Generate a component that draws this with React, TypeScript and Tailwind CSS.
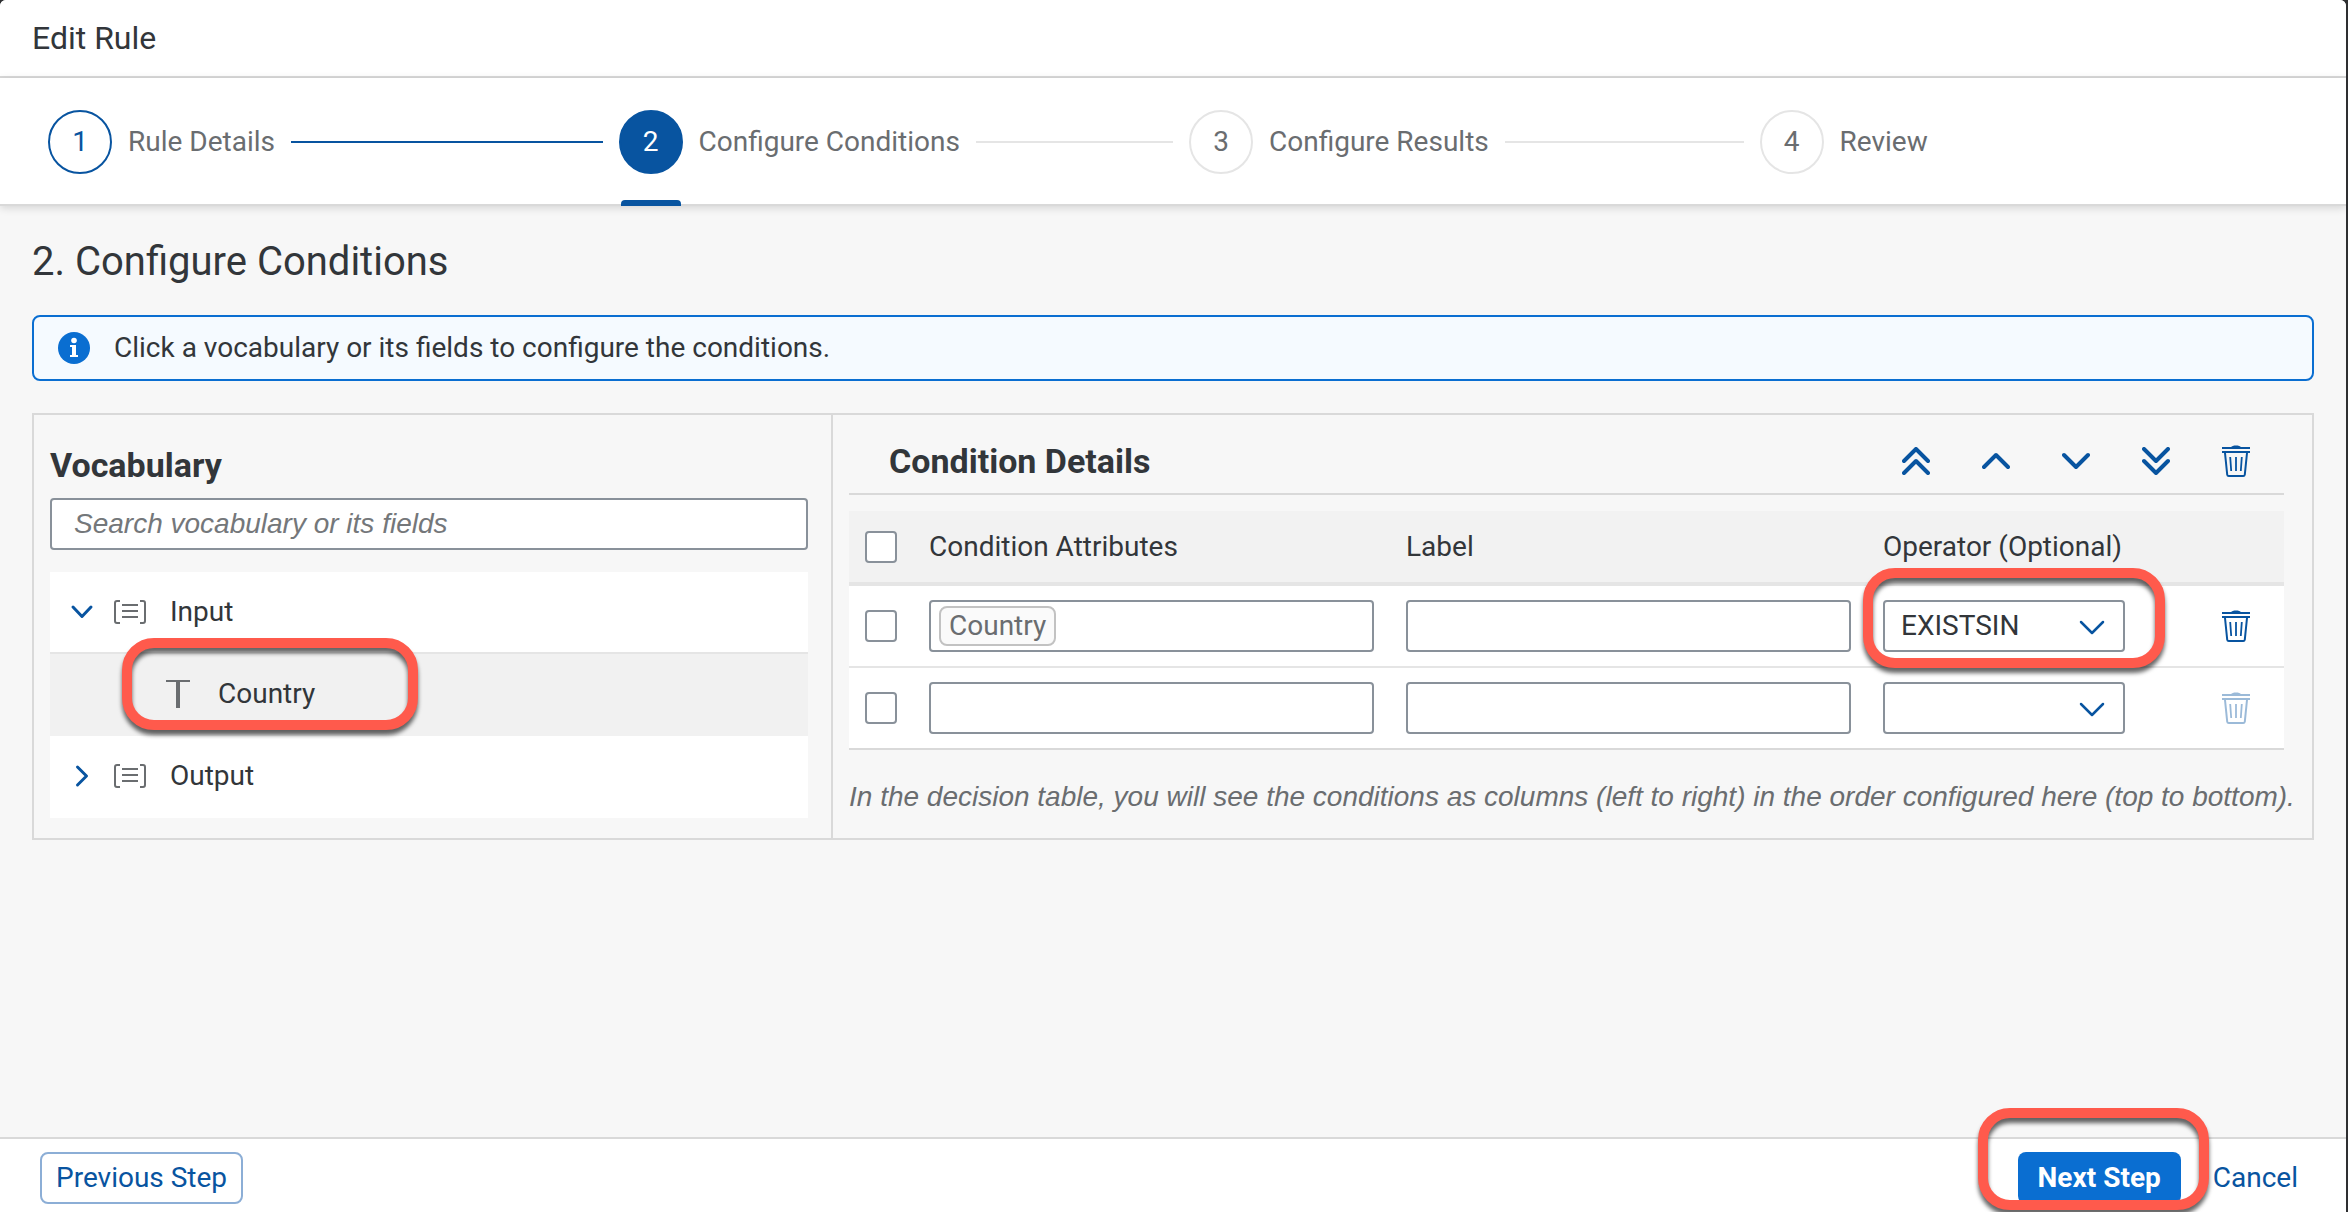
import type { ReactNode } from "react";

/* ---------- Icons ---------- */

function TrashIcon() {
  return (
    <svg viewBox="0 0 28 32" className="h-8 w-7" fill="none" stroke="currentColor" aria-hidden="true">
      <path d="M9 2.2C10 0 18 0 19 2.2Z" fill="currentColor" stroke="none" />
      <path d="M0 3h28M0 7h28" strokeWidth="2" />
      <path d="M3 8l2.2 21.6q.2 1.4 1.6 1.4h14.4q1.4 0 1.600-1.4L25 8" strokeWidth="2" />
      <path d="M8.200 12l1 14M14 12v14M19.800 12l-1 14" strokeWidth="1.800" />
    </svg>
  );
}

function ToolChevron({ d }: { d: string }) {
  return (
    <svg viewBox="0 0 28 28" className="size-7" fill="none" stroke="currentColor" strokeWidth="4" strokeLinecap="round" strokeLinejoin="round" aria-hidden="true">
      <path d={d} />
    </svg>
  );
}

function TreeArrow({ open }: { open: boolean }) {
  return (
    <svg viewBox="0 0 24 24" className="size-6 shrink-0 text-[#0854a0]" fill="none" stroke="currentColor" strokeWidth="3" strokeLinecap="round" strokeLinejoin="round" aria-hidden="true">
      <path d={open ? "M3 7l9 9.500L21 7" : "M7.500 3l9 9-9 9"} />
    </svg>
  );
}

function StructureIcon() {
  return (
    <svg viewBox="0 0 32 24" className="h-6 w-8 shrink-0 text-[#6a6d70]" fill="none" stroke="currentColor" strokeWidth="2" aria-hidden="true">
      <path d="M6 1H3Q1 1 1 3v18q0 2 2 2h3M26 1h3q2 0 2 2v18q0 2-2 2h-3" />
      <path d="M8 5h16M8 11h16M8 17h16" />
    </svg>
  );
}

function TextTypeIcon() {
  return (
    <svg viewBox="0 0 24 28" className="h-7 w-6 shrink-0 text-[#6a6d70]" fill="currentColor" aria-hidden="true">
      <rect width="24" height="2" />
      <rect x="10" width="4" height="28" />
    </svg>
  );
}

function InfoIcon() {
  return (
    <svg viewBox="0 0 32 32" className="size-8 shrink-0" aria-hidden="true">
      <circle cx="16" cy="16" r="16" fill="#0a6ed1" />
      <circle cx="16" cy="8.500" r="2.800" fill="#fff" />
      <path d="M12 13h6v10h2v2h-8v-2h2v-8h-2z" fill="#fff" />
    </svg>
  );
}

/* ---------- Shared parts ---------- */

function Highlight({ className }: { className: string }) {
  return (
    <span
      aria-hidden="true"
      className={`pointer-events-none absolute z-20 rounded-[32px] border-[10px] border-[#ff5a4c] drop-shadow-[0_5px_2px_rgba(0,0,0,0.6)] ${className}`}
    />
  );
}

function CheckBox({ label }: { label: string }) {
  return (
    <input
      type="checkbox"
      aria-label={label}
      className="block size-8 appearance-none rounded-sm border-2 border-[#89919a] bg-white checked:bg-[#0854a0]"
    />
  );
}

const circleStyles = {
  done: "border-[#0854a0] bg-white text-[#0854a0]",
  active: "border-[#0854a0] bg-[#0854a0] text-white",
  todo: "border-[#e5e5e5] bg-white text-[#6a6d70]",
};

type StepState = keyof typeof circleStyles;

const steps: { label: string; state: StepState }[] = [
  { label: "Rule Details", state: "done" },
  { label: "Configure Conditions", state: "active" },
  { label: "Configure Results", state: "todo" },
  { label: "Review", state: "todo" },
];

function Wizard() {
  return (
    <nav aria-label="Wizard steps" className="relative z-10 border-b-2 border-[#d9d9d9] bg-white pt-8 pr-4 pb-[30px] pl-12 shadow-[0_2px_8px_rgba(0,0,0,0.14)]">
      <ol className="grid grid-cols-4">
        {steps.map((step, i) => (
          <li key={step.label} className="flex items-center gap-4 pr-4">
            <button
              type="button"
              aria-current={step.state === "active" ? "step" : undefined}
              className="relative flex items-center gap-4 whitespace-nowrap text-[#6a6d70]"
            >
              <span className={`flex size-16 items-center justify-center rounded-full border-2 ${circleStyles[step.state]}`}>{i + 1}</span>
              {step.label}
              {step.state === "active" && <span className="absolute -bottom-8 left-0.5 h-1.5 w-[60px] rounded-t bg-[#0854a0]" />}
            </button>
            {i < steps.length - 1 && (
              <span className={`h-0.5 flex-1 ${step.state === "done" ? "bg-[#0854a0]" : "bg-[#e5e5e5]"}`} />
            )}
          </li>
        ))}
      </ol>
    </nav>
  );
}

/* ---------- Vocabulary ---------- */

function VocabularyPanel() {
  return (
    <section className="border-r-2 border-[#d9d9d9] pt-[30px] pr-[23px] pb-5 pl-4">
      <h2 className="text-[34px] leading-10 font-bold">Vocabulary</h2>
      <input
        type="search"
        aria-label="Search vocabulary or its fields"
        placeholder="Search vocabulary or its fields"
        className="mt-[13px] block h-[52px] w-full rounded border-2 border-[#89919a] bg-white px-[22px] font-['Liberation_Sans',sans-serif] placeholder:text-[#74777a] placeholder:italic"
      />
      <ul className="mt-[22px] bg-white">
        <li className="border-b-2 border-[#e5e5e5]">
          <button type="button" aria-expanded="true" className="flex h-20 w-full items-center pl-5">
            <TreeArrow open />
            <span className="ml-5 flex items-center gap-6">
              <StructureIcon />
              Input
            </span>
          </button>
        </li>
        <li className="relative bg-[#f1f1f1]">
          <button type="button" className="flex h-[82px] w-full items-center gap-7 pb-0.5 pl-[116px]">
            <TextTypeIcon />
            Country
          </button>
          <Highlight className="-top-4 left-[72px] h-[92px] w-[296px]" />
        </li>
        <li>
          <button type="button" aria-expanded="false" className="flex h-[82px] w-full items-center pb-0.5 pl-5">
            <TreeArrow open={false} />
            <span className="ml-5 flex items-center gap-6">
              <StructureIcon />
              Output
            </span>
          </button>
        </li>
      </ul>
    </section>
  );
}

/* ---------- Condition details ---------- */

const tools: { label: string; icon: ReactNode }[] = [
  { label: "Move to top", icon: <ToolChevron d="M2 14L14 2l12 12M2 26l12-12 12 12" /> },
  { label: "Move up", icon: <ToolChevron d="M2 20L14 8l12 12" /> },
  { label: "Move down", icon: <ToolChevron d="M2 8l12 12L26 8" /> },
  { label: "Move to bottom", icon: <ToolChevron d="M2 2l12 12L26 2M2 14l12 12 12-12" /> },
  { label: "Delete", icon: <TrashIcon /> },
];

const rows = [
  { attribute: "Country", operator: "EXISTSIN", removable: true, highlighted: true, line: "border-[#e5e5e5]" },
  { attribute: "", operator: "", removable: false, highlighted: false, line: "border-[#d9d9d9]" },
];

function ConditionTable() {
  return (
    <table className="mt-4 w-full table-fixed border-separate border-spacing-0 text-left">
      <colgroup>
        <col className="w-16" />
        <col />
        <col />
        <col className="w-[274px]" />
        <col className="w-[143px]" />
      </colgroup>
      <thead>
        <tr className="h-[75px] bg-[#f2f2f2] [&>th]:border-b-4 [&>th]:border-[#e5e5e5] [&>th]:px-4 [&>th]:font-normal">
          <th>
            <CheckBox label="Select all conditions" />
          </th>
          <th>Condition Attributes</th>
          <th>Label</th>
          <th>Operator (Optional)</th>
          <th aria-label="Actions" />
        </tr>
      </thead>
      <tbody>
        {rows.map((row, i) => (
          <tr key={i} className="h-[82px] bg-white">
            <td className={`border-b-2 px-4 ${row.line}`}>
              <CheckBox label={`Select condition ${i + 1}`} />
            </td>
            <td className={`border-b-2 px-4 ${row.line}`}>
              <div className="flex h-[52px] items-center rounded border-2 border-[#89919a] bg-white px-2">
                {row.attribute && (
                  <span className="flex h-10 items-center rounded-lg border-2 border-[#c2c2c2] bg-[#fafafa] px-2 text-[#6a6d70]">{row.attribute}</span>
                )}
                <input type="text" aria-label={`Condition attribute ${i + 1}`} className="h-full min-w-0 flex-1 outline-none" />
              </div>
            </td>
            <td className={`border-b-2 px-4 ${row.line}`}>
              <input
                type="text"
                aria-label={`Label ${i + 1}`}
                className="block h-[52px] w-full rounded border-2 border-[#89919a] bg-white px-4"
              />
            </td>
            <td className={`border-b-2 px-4 ${row.line}`}>
              <div className="relative">
                <select
                  aria-label={`Operator ${i + 1}`}
                  defaultValue={row.operator}
                  className="block h-[52px] w-full appearance-none rounded border-2 border-[#89919a] bg-white pr-14 pl-4"
                >
                  <option value="" />
                  <option value="EXISTSIN">EXISTSIN</option>
                </select>
                <svg viewBox="0 0 26 16" className="pointer-events-none absolute top-5 right-5 h-4 w-[26px] text-[#0854a0]" fill="none" stroke="currentColor" strokeWidth="2.500" strokeLinecap="round" strokeLinejoin="round" aria-hidden="true">
                  <path d="M2 2l11 11L24 2" />
                </svg>
                {row.highlighted && <Highlight className="-top-8 -right-10 -bottom-4 -left-5" />}
              </div>
            </td>
            <td className={`border-b-2 ${row.line}`}>
              <button
                type="button"
                aria-label={`Delete condition ${i + 1}`}
                disabled={!row.removable}
                className="mr-2 ml-auto flex h-[52px] w-20 items-center justify-center text-[#0854a0] disabled:opacity-40"
              >
                <TrashIcon />
              </button>
            </td>
          </tr>
        ))}
      </tbody>
    </table>
  );
}

function ConditionPanel() {
  return (
    <section className="pr-3 pb-5 pl-4">
      <div className="pr-4">
        <div className="flex h-20 items-center border-b-2 border-[#d9d9d9] pt-3.5 pr-2 pl-10">
          <h2 className="flex-1 text-[34px] leading-10 font-bold">Condition Details</h2>
          {tools.map((tool) => (
            <button key={tool.label} type="button" aria-label={tool.label} className="flex h-[52px] w-20 items-center justify-center text-[#0854a0]">
              {tool.icon}
            </button>
          ))}
        </div>
        <ConditionTable />
      </div>
      <p className="mt-[27px] font-['Liberation_Sans',sans-serif] text-[#6a6d70] italic">
        In the decision table, you will see the conditions as columns (left to right) in the order configured here (top to bottom).
      </p>
    </section>
  );
}

export default function App() {
  return (
    <div className="flex min-h-screen bg-[#2e2f31] pr-0.5 font-[Roboto,sans-serif] text-[28px] leading-10 text-[#32363a]">
      <div className="flex flex-1 flex-col overflow-hidden rounded-t-md bg-[#f7f7f7]">
        <header className="border-b-2 border-[#d9d9d9] bg-white px-8 py-[18px]">
          <h1 className="text-[32px] leading-10">Edit Rule</h1>
        </header>
        <Wizard />
        <main className="flex-1 px-8 pt-8">
          <h2 className="text-[40px] leading-[48px]">2. Configure Conditions</h2>
          <div role="status" className="mt-[29px] flex items-center gap-6 rounded-lg border-2 border-[#0a6ed1] bg-[#f5faff] px-6 py-[11px]">
            <InfoIcon />
            Click a vocabulary or its fields to configure the conditions.
          </div>
          <div className="mt-8 grid grid-cols-[799fr_1479fr] border-2 border-[#d9d9d9]">
            <VocabularyPanel />
            <ConditionPanel />
          </div>
        </main>
        <footer className="flex items-center border-t-2 border-[#d9d9d9] bg-white pt-[13px] pr-8 pb-2 pl-10 text-[#0854a0]">
          <button type="button" className="h-[52px] rounded-lg border-2 border-[#8caed6] bg-white px-3.5">
            Previous Step
          </button>
          <span className="relative mr-4 ml-auto">
            <button type="button" className="block h-[52px] rounded-lg bg-[#0a6ed1] px-5 font-bold text-white">
              Next Step
            </button>
            <Highlight className="-top-11 -right-7 -bottom-1.5 -left-10" />
          </span>
          <button type="button" className="h-[52px] px-4">
            Cancel
          </button>
        </footer>
      </div>
    </div>
  );
}
